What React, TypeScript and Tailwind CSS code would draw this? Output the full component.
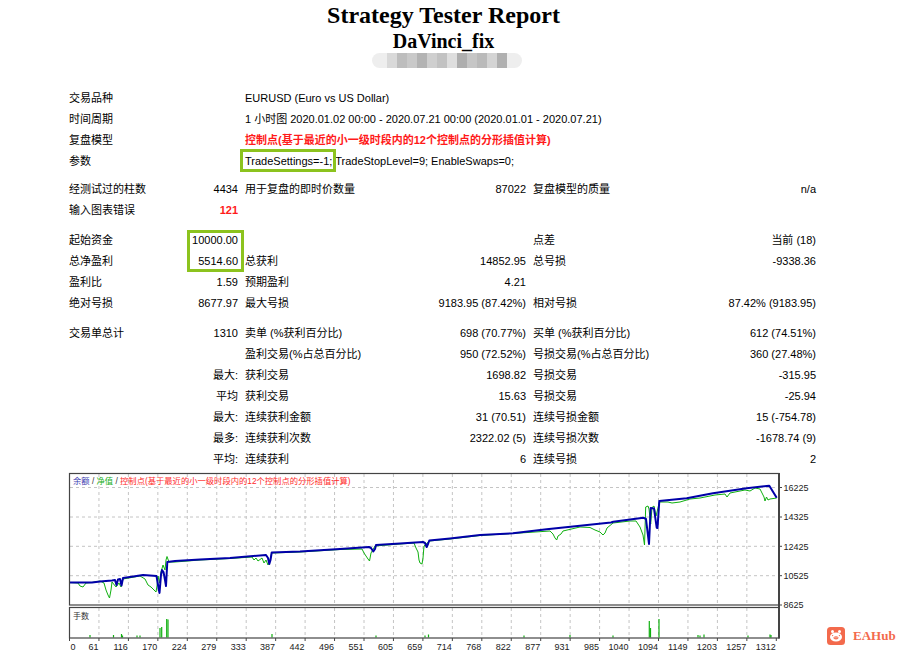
import React from "react";

const blue: number[][] = [
  [70, 582.5], [92, 582.5], [100, 581.5], [112, 580.5], [115, 580], [116.5, 585], [118, 579.5], [120, 579], [121.5, 585.5], [123, 578],
  [130, 577], [143, 575], [150, 575.5], [156.5, 576], [158, 585], [159.5, 593], [161, 575], [162, 570], [163.5, 572], [165, 580],
  [166, 586], [167.3, 562], [175, 561], [200, 559.5], [230, 558], [266, 555], [268, 558], [269.3, 564], [270.5, 560], [271.7, 552.5],
  [300, 551.5], [340, 549], [369, 547], [371, 548], [373.3, 551.5], [375, 549], [376, 545], [400, 543.5], [423, 542], [425, 543],
  [426.7, 547], [428, 544], [429.3, 540.5], [450, 538.5], [480, 535], [513, 533.3], [546.7, 529.3], [580, 525.7], [611, 522.5],
  [613.3, 521.7], [643.3, 517.7], [646, 519], [649, 544], [650.7, 508], [654, 508.5], [656.7, 527.7], [657.5, 528], [659.3, 501],
  [686.7, 498.3], [713, 493.3], [746.7, 488.3], [766.7, 486], [769.3, 485.7], [776.7, 497.7],
];

const green: number[][] = [
  [70, 582.5], [78, 583], [80, 586], [83, 587], [86, 583], [92, 582.5], [100, 581], [104, 583], [106, 590], [108, 595],
  [109.5, 598], [111, 590], [112, 582], [116, 587], [119, 583], [121, 587], [123, 579], [140, 576], [145, 579], [148, 585],
  [151, 587], [154, 590], [156, 592], [157, 586], [158, 576], [159.5, 583], [161, 572], [163, 565], [165, 570], [166, 560],
  [167, 556.5], [169, 562], [175, 562], [200, 560], [230, 558.5], [252, 557], [254, 560], [256, 558], [258, 561], [262, 558],
  [264, 563], [266, 560], [268, 565], [269.5, 562], [271.7, 553], [300, 552], [340, 549.5], [362, 549], [364, 553], [366, 556],
  [368, 559], [369.5, 561], [371, 553], [375, 546], [400, 544], [414, 543], [416, 548], [418, 552], [419, 560], [420, 563],
  [422, 564], [423, 558], [424, 546], [429.3, 541], [450, 539], [480, 535.5], [520, 533], [550, 531], [553, 534], [555, 538],
  [556.7, 540], [558, 536], [561, 534], [563, 531], [580, 527], [590, 527.5], [595, 530], [600, 532], [603, 535], [605, 533],
  [607, 528], [613, 523], [630, 521], [636, 521], [640, 527], [643, 535], [644.5, 545], [645.7, 507], [648, 506], [649, 509],
  [650.7, 524], [652, 507.5], [654, 506], [656, 516], [658, 508], [659.3, 502], [668, 502], [672, 503], [680, 502], [690, 499],
  [700, 498], [715, 495], [725, 494], [727, 497], [730, 493], [745, 490], [750, 491], [755, 488], [760, 489], [762, 493],
  [764, 497], [765, 501], [766.5, 497], [768, 500], [770, 499], [776.7, 498],
];

const lots: number[][] = [
  [90, 635], [113.5, 635], [121.5, 634], [122.5, 635.5], [137, 635.5], [140, 635.5], [160, 628], [161.7, 627], [166.7, 619],
  [168, 619.5], [272, 634], [376, 635.5], [425, 635.5], [428.5, 634.5], [524, 635.5], [570, 635], [613, 635.5], [649.3, 621],
  [650.5, 628], [659, 619], [698, 635], [700, 635.5], [704, 634.5], [748, 635.5], [770, 634.5], [771, 635],
];

const xLabels = ["0", "61", "116", "170", "224", "279", "333", "387", "442", "496", "551", "605", "659", "714", "768", "822", "877", "931", "985", "1040", "1094", "1149", "1203", "1257", "1312"];
const yTicks = [
  { y: 487.5, t: "16225" },
  { y: 517, t: "14325" },
  { y: 546.3, t: "12425" },
  { y: 575.7, t: "10525" },
  { y: 605, t: "8625" },
];

const pts = (a: number[][]) => a.map((p) => p.join(",")).join(" ");

const Chart = () => {
  const xs = xLabels.map((_, i) => 69.5 + i * 29.45);
  return (
    <svg className="block ml-[68px]" width={762} height={182} viewBox="68 472 762 182">
      {xs.slice(1, 24).map((x, i) => (
        <g key={i}>
          <line x1={x} y1={474} x2={x} y2={605} stroke="#c4c4c4" strokeDasharray="3 3" />
          <line x1={x} y1={608} x2={x} y2={638} stroke="#c4c4c4" strokeDasharray="3 3" />
        </g>
      ))}
      {yTicks.slice(0, 4).map((t, i) => (
        <line key={i} x1={70} y1={t.y} x2={779} y2={t.y} stroke="#c4c4c4" strokeDasharray="3 3" />
      ))}
      <polyline points={pts(green)} fill="none" stroke="#10b010" strokeWidth={1} />
      <polyline points={pts(blue)} fill="none" stroke="#0000a8" strokeWidth={2} strokeLinejoin="round" />
      {lots.map((l, i) => (
        <line key={i} x1={l[0]} y1={637.5} x2={l[0]} y2={l[1]} stroke="#10b010" strokeWidth={1.2} />
      ))}
      <rect x={69.5} y={473.5} width={709.5} height={131.5} fill="none" stroke="#444" strokeWidth={1.2} />
      <rect x={69.5} y={607.5} width={709.5} height={30.5} fill="none" stroke="#444" strokeWidth={1.2} />
      <line x1={779} y1={473} x2={779} y2={638.5} stroke="#444" strokeWidth={2} />
      {xs.map((x, i) => (
        <line key={i} x1={x} y1={638} x2={x} y2={641} stroke="#444" />
      ))}
      {yTicks.map((t, i) => (
        <g key={i}>
          <line x1={779} y1={t.y} x2={782} y2={t.y} stroke="#444" />
          <text x={783.5} y={t.y + 3.3} fontSize={9} fill="#222" fontFamily="Liberation Sans, sans-serif">
            {t.t}
          </text>
        </g>
      ))}
      {xLabels.map((t, i) => (
        <text
          key={i}
          x={i === 0 ? 70.5 : xs[i] - 0.5}
          y={649.5}
          fontSize={9}
          fill="#222"
          textAnchor={i === 0 ? "start" : "end"}
          fontFamily="Liberation Sans, sans-serif"
        >
          {t}
        </text>
      ))}
      <text x={73} y={484} fontSize={8.3} fontFamily="Liberation Sans, Noto Sans CJK SC, sans-serif">
        <tspan fill="#3b3bb0">余额</tspan>
        <tspan fill="#333"> / </tspan>
        <tspan fill="#22b022">净值</tspan>
        <tspan fill="#333"> / </tspan>
        <tspan fill="#ff2a2a">控制点(基于最近的小一级时段内的12个控制点的分形插值计算)</tspan>
      </text>
      <text x={73} y={618.5} fontSize={8} fill="#333" fontFamily="Noto Sans CJK SC, sans-serif">
        手数
      </text>
    </svg>
  );
};

const L = ({ children, cls = "" }: any) => <div className={`pl-[4px] whitespace-nowrap ${cls}`}>{children}</div>;
const V = ({ children, cls = "" }: any) => <div className={`pr-[3px] text-right whitespace-nowrap ${cls}`}>{children}</div>;
const E = () => <div></div>;

const App = () => {
  const mosaic = ["#d9d9d9", "#bdbdbd", "#c9c9c9", "#b3b3b3", "#cfcfcf", "#c2c2c2", "#dedede", "#aeaeae", "#c6c6c6", "#bababa", "#d4d4d4", "#b0b0b0"];
  return (
    <div className="relative w-[900px] h-[654px] bg-white overflow-hidden text-black font-['Liberation_Sans','Noto_Sans_CJK_SC',sans-serif]">
      <div className="w-[887px] text-center font-['Liberation_Serif',serif] font-bold">
        <div className="pt-[1px] text-[24px] leading-[28px]">Strategy Tester Report</div>
        <div className="text-[20px] leading-[24px]">DaVinci_fix</div>
      </div>
      <div className="ml-[372px] w-[150px] h-[15px] rounded-full bg-[#eeeeee] flex items-center justify-center blur-[0.6px]">
        {mosaic.map((c, i) => (
          <div key={i} className="w-[10px] h-[15px]" style={{ background: c }}></div>
        ))}
      </div>

      <div className="mt-[20px] ml-[68px] grid grid-cols-[112px_61px_179px_109px_171px_119px] text-[11px] leading-[21px]">
        <div className="col-span-2 pl-[1px]">交易品种</div>
        <L cls="col-span-4">EURUSD (Euro vs US Dollar)</L>
        <div className="col-span-2 pl-[1px]">时间周期</div>
        <L cls="col-span-4">1 小时图 2020.01.02 00:00 - 2020.07.21 00:00 (2020.01.01 - 2020.07.21)</L>
        <div className="col-span-2 pl-[1px]">复盘模型</div>
        <L cls="col-span-4 font-bold text-[#ff1a1a]">控制点(基于最近的小一级时段内的12个控制点的分形插值计算)</L>
        <div className="col-span-2 pl-[1px]">参数</div>
        <L cls="col-span-4">
          <span className="relative">
            TradeSettings=-1;
            <span className="absolute left-[-5px] right-[-4px] top-[-6px] bottom-[-5px] border-[3px] border-[#8cc31e]"></span>
          </span>{" "}
          TradeStopLevel=9; EnableSwaps=0;
        </L>
        <div className="col-span-6 h-[6.6px]"></div>

        <div className="pl-[1px] whitespace-nowrap">经测试过的柱数</div>
        <V>4434</V>
        <L>用于复盘的即时价数量</L>
        <V>87022</V>
        <L>复盘模型的质量</L>
        <V>n/a</V>
        <div className="pl-[1px]">输入图表错误</div>
        <V cls="font-bold text-[#ff1a1a]">121</V>
        <E /><E /><E /><E />
        <div className="col-span-6 h-[9px]"></div>

        <div className="pl-[1px]">起始资金</div>
        <div className="relative pr-[3px] text-right">
          10000.00
          <div className="absolute left-[7px] right-[-3px] top-[0px] h-[42px] border-[3px] border-[#8cc31e]"></div>
        </div>
        <E /><E />
        <L>点差</L>
        <V>当前 (18)</V>
        <div className="pl-[1px]">总净盈利</div>
        <V>5514.60</V>
        <L>总获利</L>
        <V>14852.95</V>
        <L>总号损</L>
        <V>-9338.36</V>
        <div className="pl-[1px]">盈利比</div>
        <V>1.59</V>
        <L>预期盈利</L>
        <V>4.21</V>
        <E /><E />
        <div className="pl-[1px]">绝对号损</div>
        <V>8677.97</V>
        <L>最大号损</L>
        <V>9183.95 (87.42%)</V>
        <L>相对号损</L>
        <V>87.42% (9183.95)</V>
        <div className="col-span-6 h-[9px]"></div>

        <div className="pl-[1px]">交易单总计</div>
        <V>1310</V>
        <L>卖单 (%获利百分比)</L>
        <V>698 (70.77%)</V>
        <L>买单 (%获利百分比)</L>
        <V>612 (74.51%)</V>
        <E /><E />
        <L>盈利交易(%占总百分比)</L>
        <V>950 (72.52%)</V>
        <L>号损交易(%占总百分比)</L>
        <V>360 (27.48%)</V>
        <E />
        <V>最大:</V>
        <L>获利交易</L>
        <V>1698.82</V>
        <L>号损交易</L>
        <V>-315.95</V>
        <E />
        <V>平均</V>
        <L>获利交易</L>
        <V>15.63</V>
        <L>号损交易</L>
        <V>-25.94</V>
        <E />
        <V>最大:</V>
        <L>连续获利金额</L>
        <V>31 (70.51)</V>
        <L>连续号损金额</L>
        <V>15 (-754.78)</V>
        <E />
        <V>最多:</V>
        <L>连续获利次数</L>
        <V>2322.02 (5)</V>
        <L>连续号损次数</L>
        <V>-1678.74 (9)</V>
        <E />
        <V>平均:</V>
        <L>连续获利</L>
        <V>6</V>
        <L>连续号损</L>
        <V>2</V>
      </div>

      <div className="mt-[2.4px]">
        <Chart />
      </div>

      <div className="absolute left-[827px] top-[627px] flex items-center gap-[8px]">
        <svg width={18} height={18} viewBox="0 0 18 18">
          <rect x={0} y={0} width={18} height={18} rx={3.5} fill="#f36a4c" />
          <circle cx={5.5} cy={4.6} r={1.5} fill="#fff" />
          <circle cx={12.5} cy={4.6} r={1.5} fill="#fff" />
          <ellipse cx={9} cy={10} rx={6} ry={4.6} fill="#fff" />
          <ellipse cx={9} cy={10.8} rx={2.6} ry={1.6} fill="#f36a4c" />
          <circle cx={8} cy={10.8} r={0.55} fill="#fff" />
          <circle cx={10} cy={10.8} r={0.55} fill="#fff" />
          <circle cx={5.6} cy={8.6} r={0.7} fill="#f36a4c" />
          <circle cx={12.4} cy={8.6} r={0.7} fill="#f36a4c" />
        </svg>
        <span className="font-['Liberation_Serif',serif] font-bold text-[13px] leading-[18px] text-[#f36a4c]">EAHub</span>
      </div>
    </div>
  );
};

export default App;
